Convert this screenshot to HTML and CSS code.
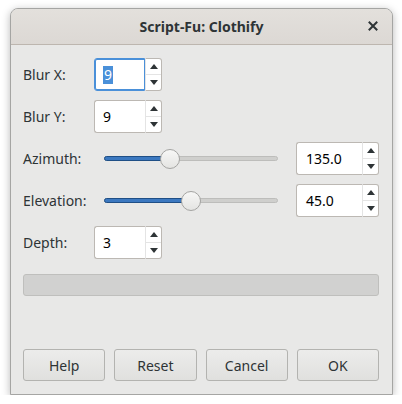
FILE: index.html
```html
<!DOCTYPE html>
<html>
<head>
<meta charset="utf-8">
<link rel="stylesheet" href="styles.css">
</head>
<body>
<div class="window">
  <div class="titlebar">
    <span class="title">Script-Fu: Clothify</span>
    <svg class="close" width="10" height="10" viewBox="0 0 10 10"><path d="M1.5 1.5 L8.5 8.5 M8.5 1.5 L1.5 8.5" stroke="#2e3436" stroke-width="2" stroke-linecap="square" fill="none"/></svg>
  </div>
  <div class="content">
    <div class="row">
      <span class="label">Blur X:</span>
      <div class="spin">
        <span class="val focused"><span class="sel">9</span></span>
        <span class="arrows"><span class="btn"><i class="up"></i></span><span class="btn"><i class="down"></i></span></span>
      </div>
    </div>
    <div class="row">
      <span class="label">Blur Y:</span>
      <div class="spin">
        <span class="val">9</span>
        <span class="arrows"><span class="btn"><i class="up"></i></span><span class="btn"><i class="down"></i></span></span>
      </div>
    </div>
    <div class="row">
      <span class="label">Azimuth:</span>
      <div class="slider">
        <div class="track"></div>
        <div class="fill" style="width:66px"></div>
        <div class="thumb" style="left:56px"></div>
      </div>
      <div class="spin wide">
        <span class="val">135.0</span>
        <span class="arrows"><span class="btn"><i class="up"></i></span><span class="btn"><i class="down"></i></span></span>
      </div>
    </div>
    <div class="row">
      <span class="label">Elevation:</span>
      <div class="slider">
        <div class="track"></div>
        <div class="fill" style="width:87px"></div>
        <div class="thumb" style="left:77px"></div>
      </div>
      <div class="spin wide">
        <span class="val">45.0</span>
        <span class="arrows"><span class="btn"><i class="up"></i></span><span class="btn"><i class="down"></i></span></span>
      </div>
    </div>
    <div class="row">
      <span class="label">Depth:</span>
      <div class="spin">
        <span class="val">3</span>
        <span class="arrows"><span class="btn"><i class="up"></i></span><span class="btn"><i class="down"></i></span></span>
      </div>
    </div>
    <div class="progress"></div>
    <div class="buttons">
      <button class="button">Help</button>
      <button class="button">Reset</button>
      <button class="button">Cancel</button>
      <button class="button">OK</button>
    </div>
  </div>
</div>
</body>
</html>
```
FILE: styles.css
```css
* { box-sizing: border-box; }
html, body { margin: 0; padding: 0; }
body {
  background: #ffffff;
  font-family: "Noto Sans", "DejaVu Sans", sans-serif;
  font-size: 14px;
  color: #2e3436;
  padding: 8px 0 0 10px;
}
.window {
  width: 383px;
  height: 387px;
  background: #e8e8e7;
  border: 1px solid #a5a5a3;
  border-radius: 8px 8px 0 0;
  box-shadow: 0 2px 9px rgba(0,0,0,0.28);
  display: flex;
  flex-direction: column;
}
.titlebar {
  height: 36px;
  border-bottom: 1px solid #bdb6af;
  background: linear-gradient(#e3e0dc, #dcd8d4);
  border-radius: 7px 7px 0 0;
  display: flex;
  align-items: center;
  justify-content: center;
  position: relative;
}
.title {
  font-weight: bold;
  font-size: 14px;
  color: #2e3436;
}
.close {
  position: absolute;
  right: 14px;
  top: 12px;
}
.content {
  flex: 1;
  padding: 13px 13px 13px 12px;
  display: flex;
  flex-direction: column;
}
.row {
  display: flex;
  align-items: center;
  height: 33px;
  margin-bottom: 9px;
}
.label {
  width: 71px;
  flex: none;
}
.spin {
  display: flex;
  width: 68px;
  height: 33px;
  flex: none;
}
.spin.wide { width: 83px; }
.val {
  flex: 1;
  background: #fff;
  border: 1px solid #bcb8b3;
  border-right: none;
  border-radius: 3px 0 0 3px;
  display: flex;
  align-items: center;
  padding-left: 8px;
  color: #000;
}
.spin.wide .val { padding-left: 9px; }
.val.focused {
  border: 1px solid #4a90d9;
  box-shadow: inset 1px 0 0 #4a90d9, inset 0 1px 0 #4a90d9, inset 0 -1px 0 #4a90d9;
  padding-left: 8px;
}
.sel {
  background: #4a90d9;
  color: #fff;
  display: inline-block;
  height: 18px;
  line-height: 18px;
  padding: 0 1px;
}
.arrows {
  width: 17px;
  display: flex;
  flex-direction: column;
  background: #fff;
  border: 1px solid #bcb8b3;
  border-left: 1px solid #e4e4e4;
  border-radius: 0 3px 3px 0;
}
.btn {
  flex: 1;
  display: flex;
  align-items: center;
  justify-content: center;
}
.btn + .btn { border-top: 1px solid #e4e4e4; }
.up {
  width: 0; height: 0;
  border-left: 4.5px solid transparent;
  border-right: 4.5px solid transparent;
  border-bottom: 5px solid #2e3436;
}
.down {
  width: 0; height: 0;
  border-left: 4.5px solid transparent;
  border-right: 4.5px solid transparent;
  border-top: 5px solid #2e3436;
}
.slider {
  flex: 1;
  margin: 0 18px 0 10px;
  height: 20px;
  position: relative;
}
.track {
  position: absolute;
  left: 0; right: 0;
  top: 7px;
  height: 5px;
  background: #cfcfcd;
  border: 1px solid #bdbdbb;
  border-radius: 3px;
}
.fill {
  position: absolute;
  left: 0;
  top: 7px;
  height: 5px;
  background: #3b78c0;
  border: 1px solid #1f4f86;
  border-radius: 3px;
}
.thumb {
  position: absolute;
  top: 0;
  width: 20px;
  height: 20px;
  border-radius: 50%;
  background: linear-gradient(#f7f7f6, #e4e4e2);
  border: 1px solid #a4a4a2;
}
.progress {
  margin-top: 6px;
  height: 22px;
  background: #d1d1d0;
  border: 1px solid #bfbfbd;
  border-radius: 3px;
}
.buttons {
  margin-top: auto;
  display: grid;
  grid-template-columns: repeat(4, 1fr);
  gap: 9px;
}
.button {
  height: 32px;
  font-family: inherit;
  font-size: 14px;
  color: #2e3436;
  background: linear-gradient(#ececeb, #e0e0de);
  border: 1px solid #b3b3b0;
  border-radius: 3px;
  padding: 0;
}
```
